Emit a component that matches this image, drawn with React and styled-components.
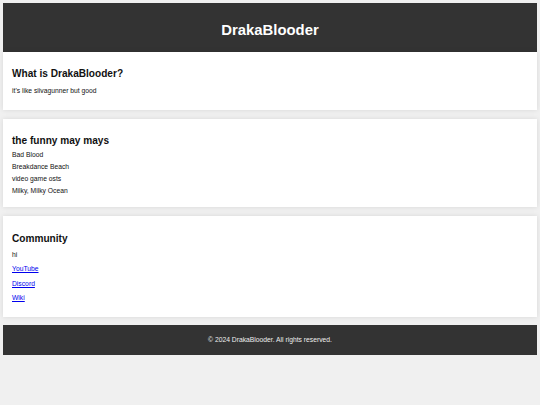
import React from 'react'
import styled, { createGlobalStyle } from 'styled-components';

const GlobalStyle = createGlobalStyle`
    html, body {
        margin: 0;
        padding: 0;
        background-color: #f0f0f0;
    }
    body {
        font-family: "Liberation Sans", Arial, sans-serif;
    }
`
const Page = styled.div`
    min-height: 100vh;
    padding: 3px;
    box-sizing: border-box;
    background-color: #f0f0f0;
`
const Header = styled.header`
    background-color: #333;
    color: #fff;
    text-align: center;
    padding: 19px 0 13px;
`
const Title = styled.h1`
    margin: 0;
    font-size: 14.85px;
    line-height: 17px;
    font-weight: bold;
`
const Section = styled.section`
    background-color: #fff;
    padding: ${props => props.$pad || '16px 9px 15px'};
    margin-top: ${props => props.$first ? '0' : '9px'};
    box-shadow: 0 0 5px rgba(0, 0, 0, 0.1);
    color: #111;
`
const Heading = styled.h2`
    margin: 0;
    font-size: 10.1px;
    line-height: 12px;
    font-weight: bold;
`
const Text = styled.p`
    margin: 7px 0 0;
    font-size: 6.75px;
    line-height: 8px;
`
const List = styled.ul`
    list-style: none;
    margin: 2px 0 0;
    padding: 0;
`
const Item = styled.li`
    font-size: 6.75px;
    line-height: 12px;
`
const Line = styled.p`
    margin: 0;
    font-size: 6.75px;
    line-height: 14.5px;
    &:first-of-type {
        margin-top: 2.5px;
    }
`
const Link = styled.a`
    color: #0000ee;
    text-decoration: underline;
`
const Footer = styled.footer`
    margin-top: 8px;
    background-color: #333;
    color: #eee;
    text-align: center;
    font-size: 6.75px;
    line-height: 8px;
    padding: 11px 0;
`

const songs = ['Bad Blood', 'Breakdance Beach', 'video game osts', 'Milky, Milky Ocean']

const App = () => {
    return (
        <Page>
            <GlobalStyle />
            <Header>
                <Title>DrakaBlooder</Title>
            </Header>
            <Section $first>
                <Heading>What is DrakaBlooder?</Heading>
                <Text>it's like siivagunner but good</Text>
            </Section>
            <Section $pad="16px 9px 10px">
                <Heading>the funny may mays</Heading>
                <List>
                    {songs.map(s => <Item key={s}>{s}</Item>)}
                </List>
            </Section>
            <Section $pad="17px 9px 11px">
                <Heading>Community</Heading>
                <Line>hi</Line>
                <Line><Link href="#">YouTube</Link></Line>
                <Line><Link href="#">Discord</Link></Line>
                <Line><Link href="#">Wiki</Link></Line>
            </Section>
            <Footer>© 2024 DrakaBlooder. All rights reserved.</Footer>
        </Page>
    )
}

export default App
